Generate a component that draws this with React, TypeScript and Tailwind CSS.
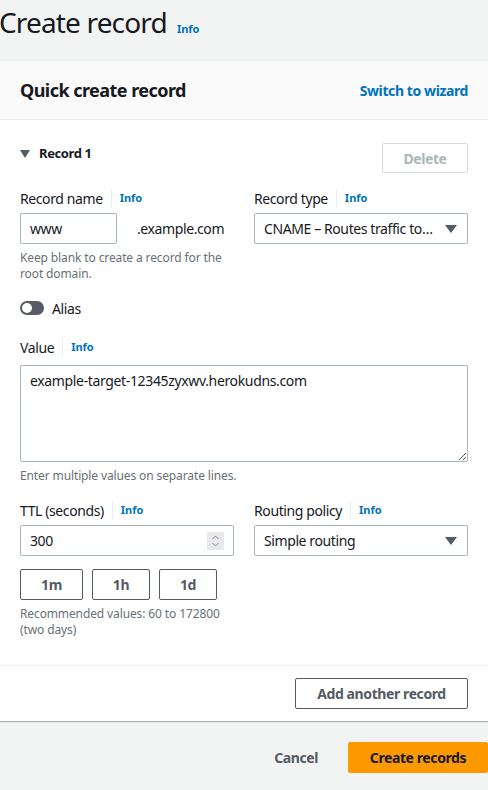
import React from 'react'

const font = { fontFamily: '"Noto Sans", "Open Sans", Arial, sans-serif' }

function Info() {
  return <span className="text-[11px] font-bold tracking-normal text-[#0073bb]">Info</span>
}

function Label({ text, className = '' }: { text: string; className?: string }) {
  return (
    <div className={`flex items-center h-5 text-[14px] text-[#16191f] ${className}`}>
      <span>{text}</span>
      <span className="mx-[8px] h-[18px] w-px bg-[#eaeded]" />
      <Info />
    </div>
  )
}

function Help({ children }: { children: React.ReactNode }) {
  return <p className="mt-[6px] text-[12px] leading-[16px] tracking-[-0.01em] text-[#687078]">{children}</p>
}

function Caret() {
  return (
    <svg width="12" height="8" viewBox="0 0 12 8" className="shrink-0">
      <path d="M0 0h12L6 8z" fill="#545b64" />
    </svg>
  )
}

function Select({ value }: { value: string }) {
  return (
    <div className="flex h-[31px] items-center justify-between rounded-[2px] border border-[#aab7b8] pl-[9px] pr-[10px] text-[14px] text-[#16191f]">
      <span className="truncate pr-3">{value}</span>
      <Caret />
    </div>
  )
}

function SmallButton({ text, className = '' }: { text: string; className?: string }) {
  return (
    <div className={`flex h-[31px] items-center justify-center rounded-[2px] border border-[#545b64] text-[14px] font-bold text-[#545b64] ${className}`}>
      {text}
    </div>
  )
}

export default function App() {
  return (
    <div className="min-h-[790px] w-[488px] overflow-hidden bg-[#f2f3f3] tracking-[-0.025em]" style={font}>
      <div className="flex h-[60px] items-start pt-[5px]">
        <h1 className="text-[28px] leading-[34px] tracking-[-0.03em] text-[#16191f] -ml-[1px]">Create record</h1>
        <span className="ml-[10px] mt-[16px] text-[11px] font-bold tracking-normal text-[#0073bb]">Info</span>
      </div>

      <div className="border-t border-[#eaeded] bg-white shadow-[0_1px_1px_0_rgba(0,28,36,0.3)]">
        <div className="flex h-[59px] items-center justify-between border-b border-[#eaeded] bg-[#fafafa] px-5">
          <span className="text-[18px] font-bold tracking-[-0.03em] text-[#16191f]">Quick create record</span>
          <span className="text-[14px] font-bold text-[#0073bb]">Switch to wizard</span>
        </div>

        <div className="px-5 pt-[23px]">
          <div className="flex items-start justify-between">
            <div className="mt-px flex h-5 items-center gap-[9px] text-[13px] font-bold text-[#16191f]">
              <svg width="10" height="8" viewBox="0 0 10 8">
                <path d="M0 0h10L5 8z" fill="#545b64" />
              </svg>
              <span>Record 1</span>
            </div>
            <div className="flex h-[30px] w-[86px] items-center justify-center rounded-[2px] border border-[#d5dbdb] text-[14px] font-bold text-[#aab7b8]">
              Delete
            </div>
          </div>

          <div className="mt-[15px] grid grid-cols-2 gap-x-5">
            <div>
              <Label text="Record name" />
              <div className="mt-[5px] flex items-center">
                <div className="flex h-[31px] w-[97px] items-center rounded-[2px] border border-[#aab7b8] pl-[9px] text-[14px] text-[#16191f]">
                  www
                </div>
                <span className="ml-5 text-[14px] text-[#16191f]">.example.com</span>
              </div>
              <Help>Keep blank to create a record for the root domain.</Help>
            </div>
            <div>
              <Label text="Record type" />
              <div className="mt-[5px]">
                <Select value="CNAME – Routes traffic to another domain name and some AWS resources" />
              </div>
            </div>
          </div>

          <div className="mt-[16px] flex h-5 items-center gap-[8px]">
            <div className="flex h-[14px] w-[24px] items-center rounded-full bg-[#545b64] pl-[2px]">
              <div className="h-[10px] w-[10px] rounded-full bg-white" />
            </div>
            <span className="text-[14px] text-[#16191f]">Alias</span>
          </div>

          <Label text="Value" className="mt-[19px]" />
          <textarea
            readOnly
            defaultValue="example-target-12345zyxwv.herokudns.com"
            className="mt-[8px] block h-[97px] w-full rounded-[2px] border border-[#aab7b8] px-[9px] py-[4px] text-[14px] tracking-[-0.025em] text-[#16191f] outline-none"
            style={font}
          />
          <Help>Enter multiple values on separate lines.</Help>

          <div className="mt-[16px] grid grid-cols-2 gap-x-5">
            <div>
              <Label text="TTL (seconds)" />
              <div className="mt-[5px] flex h-[31px] items-center justify-between rounded-[2px] border border-[#aab7b8] pl-[9px] pr-[9px] text-[14px] text-[#16191f]">
                <span>300</span>
                <div className="flex h-[18px] w-[17px] flex-col items-center justify-center bg-[#e9e9ed]">
                  <svg width="9" height="14" viewBox="0 0 9 14">
                    <path d="M1.5 5L4.5 2L7.5 5M1.5 9L4.5 12L7.5 9" fill="none" stroke="#8a8a8a" strokeWidth="1" />
                  </svg>
                </div>
              </div>
              <div className="mt-[13px] flex gap-[9px]">
                <SmallButton text="1m" className="w-[63px]" />
                <SmallButton text="1h" className="w-[58px]" />
                <SmallButton text="1d" className="w-[58px]" />
              </div>
              <Help>Recommended values: 60 to 172800 (two days)</Help>
            </div>
            <div>
              <Label text="Routing policy" />
              <div className="mt-[5px]">
                <Select value="Simple routing" />
              </div>
            </div>
          </div>
        </div>

        <div className="mt-[27px] border-t border-[#eaeded] px-5 pt-[12px] pb-[12px]">
          <div className="flex justify-end">
            <SmallButton text="Add another record" className="w-[173px]" />
          </div>
        </div>
      </div>

      <div className="mt-[21px] flex items-center justify-end">
        <span className="mr-[30px] text-[14px] font-bold text-[#545b64]">Cancel</span>
        <div className="flex h-[31px] w-[140px] items-center justify-center rounded-[2px] bg-[#ff9900] text-[14px] font-bold text-[#16191f]">
          Create records
        </div>
      </div>
    </div>
  )
}
